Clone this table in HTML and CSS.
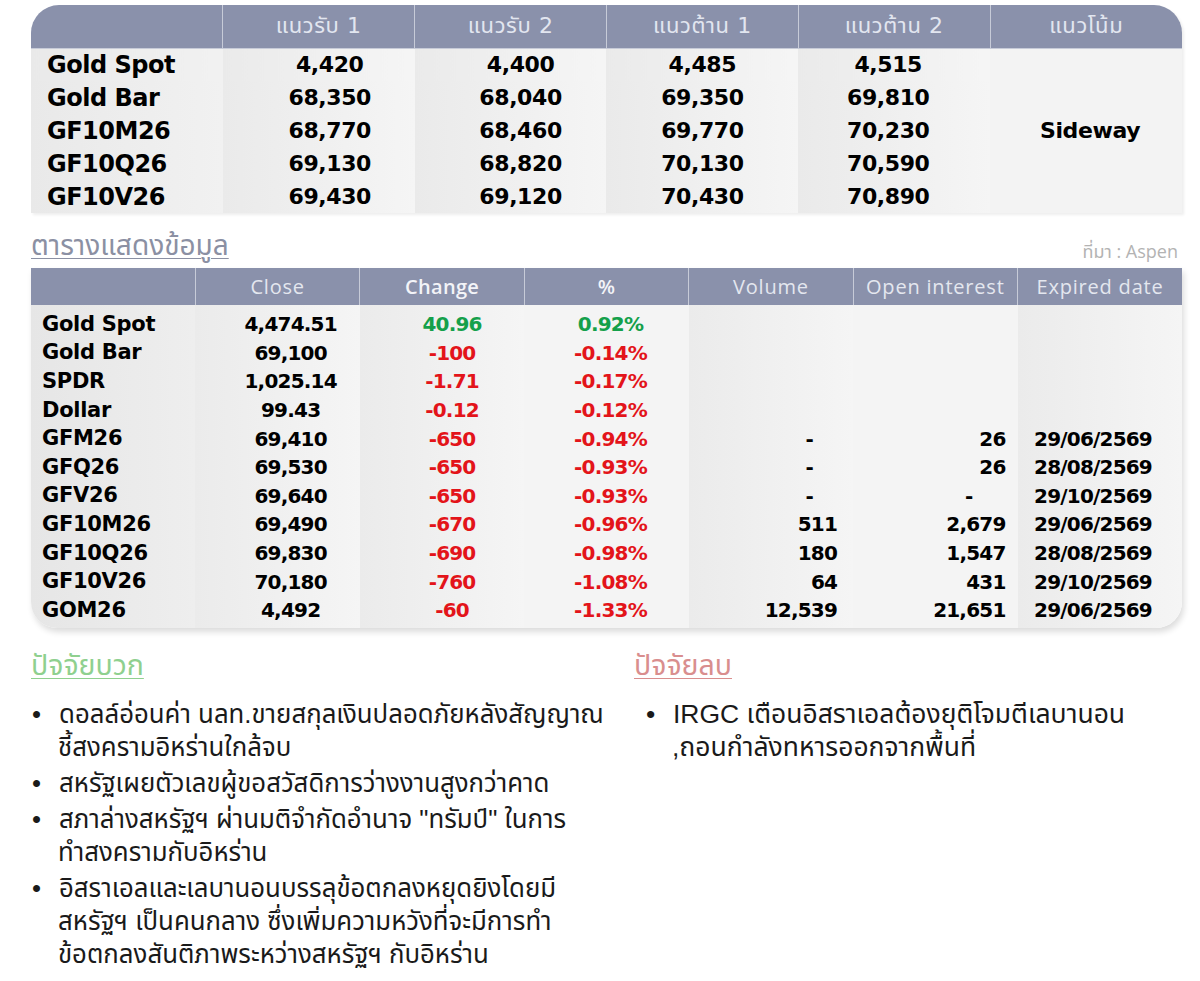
FILE: index.html
```html
<!DOCTYPE html>
<html lang="th">
<head>
<meta charset="utf-8">
<title>Gold levels</title>
<link rel="stylesheet" href="styles.css">
</head>
<body>
<div class="page">
  <div class="levels-wrap">
    <table class="levels">
      <thead>
        <tr><th></th><th>แนวรับ 1</th><th>แนวรับ 2</th><th>แนวต้าน 1</th><th>แนวต้าน 2</th><th>แนวโน้ม</th></tr>
      </thead>
      <tbody>
        <tr><td class="lbl">Gold Spot</td><td class="c1">4,420</td><td class="c2">4,400</td><td>4,485</td><td class="c4">4,515</td><td class="trend" rowspan="5">Sideway</td></tr>
        <tr><td class="lbl">Gold Bar</td><td class="c1">68,350</td><td class="c2">68,040</td><td>69,350</td><td class="c4">69,810</td></tr>
        <tr><td class="lbl">GF10M26</td><td class="c1">68,770</td><td class="c2">68,460</td><td>69,770</td><td class="c4">70,230</td></tr>
        <tr><td class="lbl">GF10Q26</td><td class="c1">69,130</td><td class="c2">68,820</td><td>70,130</td><td class="c4">70,590</td></tr>
        <tr><td class="lbl">GF10V26</td><td class="c1">69,430</td><td class="c2">69,120</td><td>70,430</td><td class="c4">70,890</td></tr>
      </tbody>
    </table>
  </div>

  <div class="caption-row">
    <span class="caption">ตารางแสดงข้อมูล</span>
    <span class="source">ที่มา : Aspen</span>
  </div>

  <div class="data-wrap">
    <table class="data">
      <thead>
        <tr><th></th><th>Close</th><th class="strong">Change</th><th class="strong">%</th><th>Volume</th><th>Open interest</th><th>Expired date</th></tr>
      </thead>
      <tbody>
        <tr><td class="lbl">Gold Spot</td><td class="close">4,474.51</td><td class="chg up">40.96</td><td class="pct up">0.92%</td><td class="vol"></td><td class="oi"></td><td class="exp"></td></tr>
        <tr><td class="lbl">Gold Bar</td><td class="close">69,100</td><td class="chg dn">-100</td><td class="pct dn">-0.14%</td><td class="vol"></td><td class="oi"></td><td class="exp"></td></tr>
        <tr><td class="lbl">SPDR</td><td class="close">1,025.14</td><td class="chg dn">-1.71</td><td class="pct dn">-0.17%</td><td class="vol"></td><td class="oi"></td><td class="exp"></td></tr>
        <tr><td class="lbl">Dollar</td><td class="close">99.43</td><td class="chg dn">-0.12</td><td class="pct dn">-0.12%</td><td class="vol"></td><td class="oi"></td><td class="exp"></td></tr>
        <tr><td class="lbl">GFM26</td><td class="close">69,410</td><td class="chg dn">-650</td><td class="pct dn">-0.94%</td><td class="vol dash">-</td><td class="oi">26</td><td class="exp">29/06/2569</td></tr>
        <tr><td class="lbl">GFQ26</td><td class="close">69,530</td><td class="chg dn">-650</td><td class="pct dn">-0.93%</td><td class="vol dash">-</td><td class="oi">26</td><td class="exp">28/08/2569</td></tr>
        <tr><td class="lbl">GFV26</td><td class="close">69,640</td><td class="chg dn">-650</td><td class="pct dn">-0.93%</td><td class="vol dash">-</td><td class="oi dash">-</td><td class="exp">29/10/2569</td></tr>
        <tr><td class="lbl">GF10M26</td><td class="close">69,490</td><td class="chg dn">-670</td><td class="pct dn">-0.96%</td><td class="vol">511</td><td class="oi">2,679</td><td class="exp">29/06/2569</td></tr>
        <tr><td class="lbl">GF10Q26</td><td class="close">69,830</td><td class="chg dn">-690</td><td class="pct dn">-0.98%</td><td class="vol">180</td><td class="oi">1,547</td><td class="exp">28/08/2569</td></tr>
        <tr><td class="lbl">GF10V26</td><td class="close">70,180</td><td class="chg dn">-760</td><td class="pct dn">-1.08%</td><td class="vol">64</td><td class="oi">431</td><td class="exp">29/10/2569</td></tr>
        <tr><td class="lbl">GOM26</td><td class="close">4,492</td><td class="chg dn">-60</td><td class="pct dn">-1.33%</td><td class="vol">12,539</td><td class="oi">21,651</td><td class="exp">29/06/2569</td></tr>
      </tbody>
    </table>
  </div>

  <div class="factors">
    <section class="factor plus">
      <h2 class="factor-title">ปัจจัยบวก</h2>
      <ul class="points">
        <li>ดอลล์อ่อนค่า นลท.ขายสกุลเงินปลอดภัยหลังสัญญาณ<br>ชี้สงครามอิหร่านใกล้จบ</li>
        <li>สหรัฐเผยตัวเลขผู้ขอสวัสดิการว่างงานสูงกว่าคาด</li>
        <li>สภาล่างสหรัฐฯ ผ่านมติจำกัดอำนาจ "ทรัมป์" ในการ<br>ทำสงครามกับอิหร่าน</li>
        <li>อิสราเอลและเลบานอนบรรลุข้อตกลงหยุดยิงโดยมี<br>สหรัฐฯ เป็นคนกลาง ซึ่งเพิ่มความหวังที่จะมีการทำ<br>ข้อตกลงสันติภาพระหว่างสหรัฐฯ กับอิหร่าน</li>
      </ul>
    </section>
    <section class="factor minus">
      <h2 class="factor-title">ปัจจัยลบ</h2>
      <ul class="points">
        <li>IRGC เตือนอิสราเอลต้องยุติโจมตีเลบานอน<br>,ถอนกำลังทหารออกจากพื้นที่</li>
      </ul>
    </section>
  </div>
</div>
</body>
</html>
```

FILE: styles.css
```css
* { box-sizing: border-box; }

body {
  margin: 0;
  background: #ffffff;
  font-family: "Liberation Sans", "Noto Sans Thai", sans-serif;
  color: #111;
}

.page {
  width: 1182px;
  padding: 5px 0 0 31px;
}

/* ---------- table 1 ---------- */
.levels-wrap {
  width: 1151px;
  border-radius: 28px 28px 0 0;
  overflow: hidden;
  box-shadow: 2px 2px 3px rgba(0, 0, 0, 0.07);
}

.levels {
  width: 100%;
  border-collapse: collapse;
  table-layout: fixed;
}

.levels th {
  height: 43px;
  padding: 0;
  background: #8a91ab;
  color: #e2e6f0;
  font: 400 22px "DejaVu Sans", "Noto Sans Thai", sans-serif;
  letter-spacing: 0.6px;
  text-align: center;
  border-left: 1px solid #c7cbd8;
  border-bottom: 1px solid #c7cbd8;
}
.levels th:first-child { border-left: 0; }

.levels td {
  height: 33px;
  padding: 0;
  font: 700 22px "DejaVu Sans", sans-serif;
  letter-spacing: -0.4px;
  color: #000;
  text-align: center;
  background: linear-gradient(90deg, #eaeaea, #f5f5f5);
  line-height: 1;
}
.levels td.lbl {
  text-align: left;
  padding-left: 16px;
  font-size: 24px;
  letter-spacing: -0.5px;
  background: linear-gradient(90deg, #e9e9e9, #f1f1f1);
}
.levels td.c1 { padding-left: 22px; }
.levels td.c2 { padding-left: 20px; }
.levels td.c4 { padding-right: 12px; }
.levels td.trend {
  background: #f3f3f3;
  padding-left: 8px;
}

/* ---------- caption ---------- */
.caption-row {
  width: 1151px;
  height: 55px;
  display: flex;
  justify-content: space-between;
  align-items: flex-end;
  padding-bottom: 8px;
}
.caption {
  font-size: 28px;
  color: #8b90a3;
  text-decoration: underline;
  text-decoration-thickness: 1px;
  text-underline-offset: 3px;
  line-height: 1;
}
.source {
  font-family: "Open Sans", "Noto Sans Thai", sans-serif;
  font-size: 18px;
  color: #b3b3b3;
  padding-right: 4px;
  line-height: 1;
}

/* ---------- table 2 ---------- */
.data-wrap {
  width: 1151px;
  border-radius: 0 0 26px 26px;
  overflow: hidden;
  box-shadow: 2px 4px 6px rgba(0, 0, 0, 0.14);
}

.data {
  width: 100%;
  border-collapse: collapse;
  table-layout: fixed;
}

.data th {
  height: 37px;
  padding: 0;
  background: #8a91ab;
  color: #e4e7ef;
  font: 400 20px "Open Sans", sans-serif;
  letter-spacing: 0.8px;
  text-align: center;
  border-left: 1px solid #c7cbd8;
}
.data th:first-child { border-left: 0; }
.data th.strong { font-weight: 600; color: #f3f4f8; letter-spacing: 0.3px; }

.data td {
  height: 28.6px;
  padding: 0;
  font: 700 20px "DejaVu Sans", sans-serif;
  letter-spacing: -0.8px;
  color: #000;
  line-height: 1;
  background: linear-gradient(90deg, #ebebeb, #f5f5f5);
}
.data tbody tr:first-child td { height: 33.6px; padding-top: 5px; }
.data tbody tr:last-child td { height: 31.6px; padding-bottom: 3px; }

.data td.lbl {
  padding-left: 11px;
  font-size: 21px;
  letter-spacing: -0.3px;
  background: linear-gradient(90deg, #e6e6e6, #eeeeee);
}
.data td.close { text-align: center; padding-left: 26px; }
.data td.chg { text-align: center; padding-left: 20px; }
.data td.pct { text-align: center; padding-left: 8px; background: #f4f4f4; }
.data td.vol { text-align: right; padding-right: 16px; }
.data td.oi { text-align: right; padding-right: 12px; background: #f4f4f4; }
.data td.exp { text-align: right; padding-right: 30px; }
.data td.vol.dash { padding-right: 40px; }
.data td.oi.dash { padding-right: 45px; }

.data td.up { color: #14a04b; }
.data td.dn { color: #e3141a; }

/* ---------- factors ---------- */
.factors {
  display: flex;
  margin-top: 20px;
}
.factor.plus { width: 603px; }
.factor.minus { flex: 1; }

.factor-title {
  margin: 0 0 16px 0;
  font-weight: 400;
  font-size: 28.5px;
  line-height: 34px;
  text-decoration: underline;
  text-decoration-thickness: 1px;
  text-underline-offset: 3px;
}
.plus .factor-title { color: #8fd08f; }
.minus .factor-title { color: #d98e8e; }

.points {
  list-style: none;
  margin: 0;
  padding: 0;
}
.minus .points { padding-left: 11px; }
.points li {
  font-size: 25.8px;
  line-height: 33px;
  color: #1a1a1a;
  padding-left: 27px;
  text-indent: -27px;
  margin-bottom: 3px;
}
.minus .points li { font-size: 26.5px; }
.points li::before {
  content: "•";
  display: inline-block;
  width: 27px;
  text-indent: 0;
  padding-left: 1px;
}
```
